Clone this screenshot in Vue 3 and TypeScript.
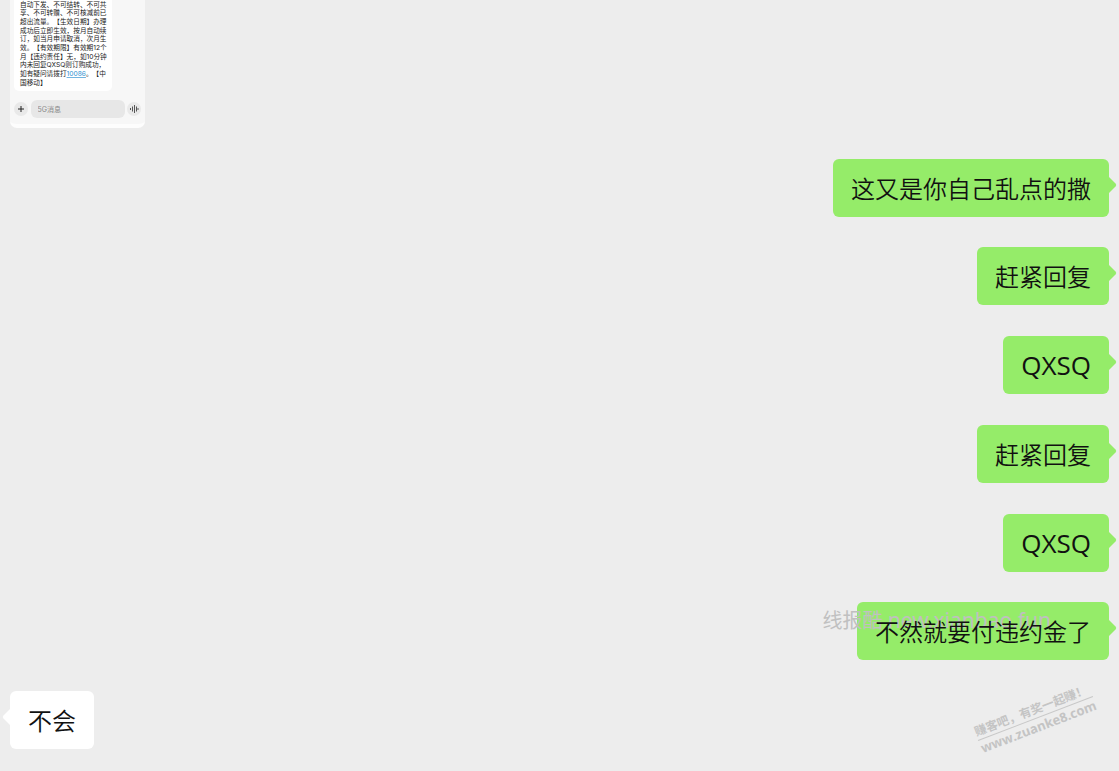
<script setup lang="ts">
interface Message {
  id: number
  side: 'mine' | 'theirs'
  text: string
  latin?: boolean
}

const messages: Message[] = [
  { id: 1, side: 'mine', text: '这又是你自己乱点的撒' },
  { id: 2, side: 'mine', text: '赶紧回复' },
  { id: 3, side: 'mine', text: 'QXSQ', latin: true },
  { id: 4, side: 'mine', text: '赶紧回复' },
  { id: 5, side: 'mine', text: 'QXSQ', latin: true },
  { id: 6, side: 'mine', text: '不然就要付违约金了' },
  { id: 7, side: 'theirs', text: '不会' },
]

const smsLines: string[] = [
  '自动下发、不可结转、不可共',
  '享、不可转赠、不可核减前已',
  '超出流量。【生效日期】办理',
  '成功后立即生效，按月自动续',
  '订，如当月申请取消，次月生',
  '效。【有效期限】有效期12个',
  '月【违约责任】无，如10分钟',
  '内未回复QXSQ则订购成功，',
]
</script>

<template>
  <main class="chat">
    <section class="phone" aria-label="5G消息">
      <div class="sms">
        <svg class="sms-text" viewBox="0 0 294 273">
          <text v-for="(line, i) in smsLines" :key="i" x="18" :y="20 + i * 26">{{ line }}</text>
          <text x="18" y="228">如有疑问请拨打<a href="tel:10086" class="tel">10086</a>。【中</text>
          <text x="18" y="254">国移动】</text>
        </svg>
      </div>
      <form class="composer" @submit.prevent>
        <button type="button" class="round" aria-label="添加">
          <svg viewBox="0 0 14 14"><path d="M7 4v6M4 7h6" /></svg>
        </button>
        <input class="field" type="text" placeholder="5G消息" aria-label="5G消息" />
        <button type="button" class="round" aria-label="语音">
          <svg class="wave" viewBox="0 0 14 14"><path d="M3.500 6v2M5.500 4.500v5M7.500 3v8M9.500 4.500v5M11 6v2" /></svg>
        </button>
      </form>
    </section>

    <div v-for="m in messages" :key="m.id" class="bubble" :class="[m.side, { latin: m.latin }]">
      <span class="words">{{ m.text }}</span>
      <svg class="tail" viewBox="0 0 8 16"><path d="M0 0L6.5 6.5Q8 8 6.5 9.500L0 16Z" /></svg>
    </div>

    <div class="site-mark">线报酷 <span class="site-url">new.xianbao.fun</span></div>
    <div class="stamp">
      <div class="stamp-title">赚客吧，有奖一起赚！</div>
      <div class="stamp-url">www.zuanke8.com</div>
    </div>
  </main>
</template>

<style>
body {
  background: #ededed;
}
</style>

<style scoped>
.chat {
  position: relative;
  box-sizing: border-box;
  min-height: 100vh;
  padding: 0 10px 22px;
  display: flex;
  flex-direction: column;
  justify-content: space-between;
  overflow: hidden;
  background: #ededed;
  font-family: "Open Sans", "Noto Sans CJK SC", sans-serif;
  text-spacing-trim: space-all;
}
.phone {
  align-self: flex-start;
  box-sizing: border-box;
  width: 135px;
  height: 128px;
  padding: 0 4px;
  border-radius: 0 0 7px 7px;
  background: #f7f7f7;
  border-bottom: 4px solid #fdfdfd;
}
.sms {
  width: 98px;
  background: #fff;
  border-radius: 0 0 5px 5px;
}
.sms-text {
  display: block;
  width: 98px;
  height: 91px;
  font-family: Inter, "Noto Sans CJK SC", sans-serif;
  font-size: 20px;
  fill: #222;
}
.tel {
  fill: #2f8fd0;
  text-decoration: underline;
}
.composer {
  display: flex;
  align-items: center;
  justify-content: space-between;
  padding-top: 9px;
}
.round {
  width: 14px;
  height: 14px;
  padding: 0;
  border: 0;
  border-radius: 50%;
  background: #e9e9e9;
}
.round svg {
  display: block;
  width: 14px;
  height: 14px;
  fill: none;
  stroke: #222;
  stroke-width: 1;
}
.round .wave {
  stroke: #555;
}
.field {
  box-sizing: border-box;
  width: 94px;
  height: 18px;
  padding: 0 7px;
  border: 0;
  border-radius: 6px;
  background: #e7e7e7;
  font: 7px Inter, "Noto Sans CJK SC", sans-serif;
}
.field::placeholder {
  color: #8a8a8a;
}
.bubble {
  position: relative;
  padding: 12px 18px;
  border-radius: 6px;
  font-family: "Noto Sans CJK SC", sans-serif;
  font-size: 24px;
  font-weight: 350;
  line-height: 34px;
  color: #111;
}
.latin {
  font-family: "Open Sans", sans-serif;
  font-size: 26px;
  font-weight: 400;
}
.words {
  position: relative;
  z-index: 2;
}
.mine {
  align-self: flex-end;
  background: #95ec69;
}
.theirs {
  align-self: flex-start;
  background: #fff;
}
.tail {
  position: absolute;
  top: 18px;
  left: 100%;
  width: 8px;
  height: 16px;
  fill: #95ec69;
}
.theirs .tail {
  left: auto;
  right: 100%;
  fill: #fff;
  transform: rotate(180deg);
}
.site-mark {
  position: absolute;
  z-index: 1;
  right: 68px;
  bottom: 136px;
  font-family: "Noto Sans", "Noto Sans CJK SC", sans-serif;
  font-size: 20px;
  line-height: 28px;
  color: #c0c0c0;
  white-space: nowrap;
}
.site-url {
  font-size: 21px;
}
.stamp {
  position: absolute;
  right: 22px;
  bottom: 35px;
  transform: rotate(-21deg);
  color: #c4c4c4;
  font-weight: 700;
  white-space: nowrap;
}
.stamp-title {
  border-bottom: 1px solid #c8c8c8;
  font-size: 12px;
  line-height: 17px;
}
.stamp-url {
  font-size: 13px;
  line-height: 17px;
}
</style>
